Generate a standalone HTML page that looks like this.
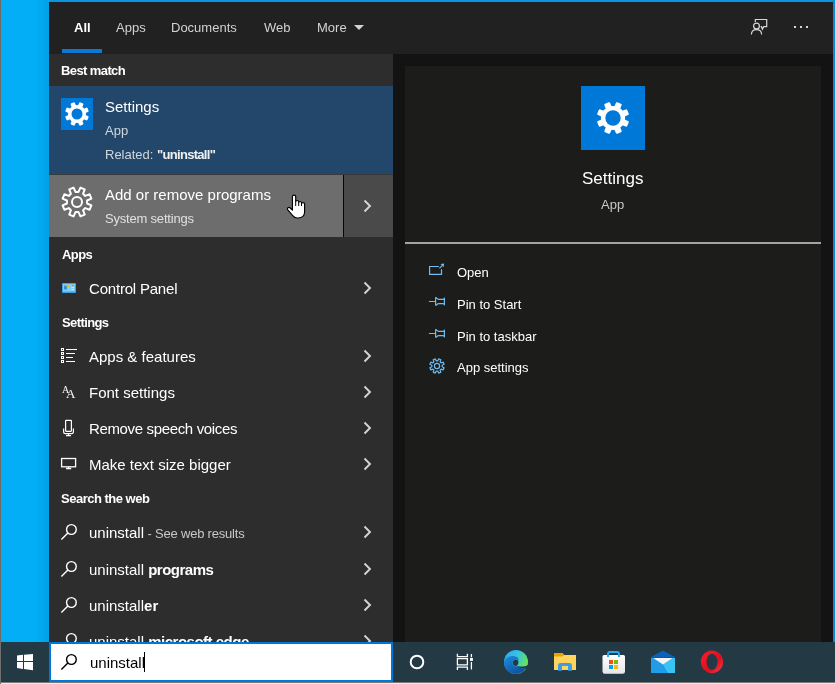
<!DOCTYPE html>
<html><head><meta charset="utf-8">
<style>
*{margin:0;padding:0;box-sizing:border-box}
html,body{width:835px;height:684px;overflow:hidden}
body{background:#03aef6;font-family:"Liberation Sans",sans-serif;position:relative;color:#fff}
.a{position:absolute;white-space:nowrap;will-change:transform}
svg{overflow:visible}
</style></head><body>
<div class="a" style="left:0;top:0;width:1px;height:684px;background:#6f6a68"></div>
<div class="a" style="left:49px;top:2px;width:784px;height:640px;background:#131313"></div>
<div class="a" style="left:49px;top:0;width:786px;height:2px;background:#0a94e2"></div>
<div class="a" style="left:833px;top:0;width:2px;height:642px;background:#0b88da"></div>
<div class="a" style="left:49px;top:2px;width:784px;height:52px;background:#212121"></div>
<div class="a" style="left:49px;top:54px;width:344px;height:588px;background:#2d2d2d"></div>
<div class="a" style="left:36px;top:0;width:13px;height:642px;background:linear-gradient(90deg,rgba(0,60,120,0),rgba(0,60,120,0.12))"></div>
<div class="a" style="left:405px;top:66px;width:416px;height:576px;background:#1c1c1b"></div>
<div class="a" style="left:74.0px;top:21.00px;font-size:13.00px;line-height:13.00px;color:#fff;font-weight:bold;">All</div>
<div class="a" style="left:116.0px;top:21.00px;font-size:13.00px;line-height:13.00px;color:#d2d2d2;font-weight:normal;">Apps</div>
<div class="a" style="left:171.0px;top:21.00px;font-size:13.00px;line-height:13.00px;color:#d2d2d2;font-weight:normal;">Documents</div>
<div class="a" style="left:264.0px;top:21.00px;font-size:13.00px;line-height:13.00px;color:#d2d2d2;font-weight:normal;">Web</div>
<div class="a" style="left:317.0px;top:21.00px;font-size:13.00px;line-height:13.00px;color:#d2d2d2;font-weight:normal;">More</div>
<svg class="a" style="left:354px;top:25px" width="10" height="5"><path d="M0 0H10L5 5Z" fill="#d2d2d2"/></svg>
<div class="a" style="left:62px;top:49px;width:40px;height:4px;background:#0a78d7"></div>
<svg class="a" style="left:745px;top:12px" width="30" height="30"><g fill="none" stroke="#d8d8d8" stroke-width="1.2">
<path d="M10.3 9.9V7.5H21.7V14.7H18.6L17.4 17.3L16.4 14.7H15.6"/><circle cx="11.5" cy="14" r="2.9"/><path d="M6.4 22.6C6.4 19.5 8.6 17.6 11.5 17.6C14.4 17.6 16.6 19.5 16.6 22.6"/></g></svg>
<div class="a" style="left:794px;top:26px;width:2px;height:2px;background:#d8d8d8"></div>
<div class="a" style="left:800px;top:26px;width:2px;height:2px;background:#d8d8d8"></div>
<div class="a" style="left:806px;top:26px;width:2px;height:2px;background:#d8d8d8"></div>
<div class="a" style="left:61.0px;top:63.70px;font-size:13.00px;line-height:13.00px;color:#fff;font-weight:bold;letter-spacing:-0.6px">Best match</div>
<div class="a" style="left:49px;top:86px;width:344px;height:88px;background:#22476a"></div>
<div class="a" style="left:61px;top:98px;width:32px;height:32px;background:#0078d7"></div>
<svg class="a" style="left:61px;top:98px" width="32" height="32"><circle cx="16.00" cy="16.00" r="9.00" fill="#fff"/><rect x="13.70" y="4.00" width="4.60" height="5.00" rx="1.2" fill="#fff" transform="rotate(22.5 16.00 16.00)"/><rect x="13.70" y="4.00" width="4.60" height="5.00" rx="1.2" fill="#fff" transform="rotate(67.5 16.00 16.00)"/><rect x="13.70" y="4.00" width="4.60" height="5.00" rx="1.2" fill="#fff" transform="rotate(112.5 16.00 16.00)"/><rect x="13.70" y="4.00" width="4.60" height="5.00" rx="1.2" fill="#fff" transform="rotate(157.5 16.00 16.00)"/><rect x="13.70" y="4.00" width="4.60" height="5.00" rx="1.2" fill="#fff" transform="rotate(202.5 16.00 16.00)"/><rect x="13.70" y="4.00" width="4.60" height="5.00" rx="1.2" fill="#fff" transform="rotate(247.5 16.00 16.00)"/><rect x="13.70" y="4.00" width="4.60" height="5.00" rx="1.2" fill="#fff" transform="rotate(292.5 16.00 16.00)"/><rect x="13.70" y="4.00" width="4.60" height="5.00" rx="1.2" fill="#fff" transform="rotate(337.5 16.00 16.00)"/><circle cx="16.00" cy="16.00" r="5.50" fill="#0078d7"/></svg>
<div class="a" style="left:105.0px;top:98.80px;font-size:15.00px;line-height:15.00px;color:#fff;font-weight:normal;">Settings</div>
<div class="a" style="left:105.0px;top:124.00px;font-size:13.00px;line-height:13.00px;color:#d0d8de;font-weight:normal;">App</div>
<div class="a" style="left:105.0px;top:147.60px;font-size:13.00px;line-height:13.00px;color:#d0d8de;font-weight:normal;">Related: <b style="color:#f0f0f0;letter-spacing:-0.7px">"uninstall"</b></div>
<div class="a" style="left:49px;top:174px;width:344px;height:1px;background:#3a3a3a"></div><div class="a" style="left:49px;top:175px;width:294px;height:62px;background:#6d6d6d"></div>
<div class="a" style="left:343px;top:175px;width:1px;height:62px;background:#050505"></div>
<div class="a" style="left:344px;top:175px;width:49px;height:62px;background:#4a4a4a"></div>
<svg class="a" style="left:61px;top:186px" width="32" height="32"><path d="M17.51 5.91 L19.45 1.61 L23.73 3.38 L22.07 7.80 L24.20 9.93 L28.62 8.27 L30.39 12.55 L26.09 14.49 L26.09 17.51 L30.39 19.45 L28.62 23.73 L24.20 22.07 L22.07 24.20 L23.73 28.62 L19.45 30.39 L17.51 26.09 L14.49 26.09 L12.55 30.39 L8.27 28.62 L9.93 24.20 L7.80 22.07 L3.38 23.73 L1.61 19.45 L5.91 17.51 L5.91 14.49 L1.61 12.55 L3.38 8.27 L7.80 9.93 L9.93 7.80 L8.27 3.38 L12.55 1.61 L14.49 5.91Z" fill="none" stroke="#fff" stroke-width="2" stroke-linejoin="round"/><circle cx="16" cy="16" r="5" fill="none" stroke="#fff" stroke-width="2"/></svg>
<div class="a" style="left:105.0px;top:186.90px;font-size:15.00px;line-height:15.00px;color:#fff;font-weight:normal;">Add or remove programs</div>
<div class="a" style="left:105.0px;top:211.70px;font-size:13.00px;line-height:13.00px;color:#e0e0e0;font-weight:normal;letter-spacing:-0.2px">System settings</div>
<svg class="a" style="left:363px;top:199px" width="10" height="14"><path d="M1.5 1.5L7 7L1.5 12.5" stroke="#d4d4d4" stroke-width="1.9" fill="none"/></svg>
<svg class="a" style="left:280px;top:190px" width="32" height="32"><path d="M12.4 6.6C12.4 5.7 13.1 5.1 14.05 5.1C15 5.1 15.7 5.7 15.7 6.6V11.6C15.9 10.9 16.5 10.5 17.2 10.5C18 10.5 18.7 11 18.7 11.8V12.6C18.9 11.9 19.5 11.5 20.1 11.5C20.9 11.5 21.5 12.1 21.5 12.8V13.7C21.7 13 22.3 12.6 23 12.6C23.9 12.6 24.6 13.2 24.6 14V22C24.6 25.6 22 28 18.2 28H17.2C15.2 28 13.9 27.2 12.7 25.7L7.8 19.9C7.3 19.2 7.3 18.3 8 17.8C8.6 17.3 9.6 17.4 10.2 18L12.4 20.2Z" fill="#fff" stroke="#000" stroke-width="1.15" stroke-linejoin="round"/>
<path d="M15.7 11.6V16M18.7 12.4V16M21.5 13.6V16" stroke="#000" stroke-width="1"/></svg>
<div class="a" style="left:61.5px;top:248.20px;font-size:13.00px;line-height:13.00px;color:#fff;font-weight:bold;letter-spacing:-0.6px">Apps</div>
<svg class="a" style="left:62px;top:283px" width="14" height="10">
<rect x="0" y="0" width="14" height="10" fill="#1e7fd0"/><rect x="0.6" y="0.6" width="12.8" height="8.8" fill="#7fd0f8"/>
<rect x="2" y="2.5" width="3" height="4" fill="#3a8fd8"/><path d="M3.5 2.2L6 1.8L7.5 3.5L5.5 4.5Z" fill="#f5b800"/><circle cx="11" cy="2.5" r="0.9" fill="#f08a00"/>
<rect x="9.5" y="4.2" width="2.5" height="0.8" fill="#cfefff"/><rect x="9.5" y="6.2" width="2.5" height="0.8" fill="#cfefff"/><rect x="0.6" y="8.5" width="12.8" height="1" fill="#3aa0e8"/></svg>
<div class="a" style="left:89.2px;top:280.90px;font-size:15.00px;line-height:15.00px;color:#fff;font-weight:normal;letter-spacing:-0.2px">Control Panel</div>
<svg class="a" style="left:363px;top:281px" width="10" height="14"><path d="M1.5 1.5L7 7L1.5 12.5" stroke="#d4d4d4" stroke-width="1.9" fill="none"/></svg>
<div class="a" style="left:61.5px;top:315.60px;font-size:13.00px;line-height:13.00px;color:#fff;font-weight:bold;letter-spacing:-0.6px">Settings</div>
<svg class="a" style="left:60px;top:347px" width="18" height="16" shape-rendering="crispEdges"><rect x="1" y="1" width="3" height="3" fill="#fff"/><rect x="2" y="2" width="1" height="1" fill="#2d2d2d"/><rect x="6" y="2" width="11" height="1" fill="#fff"/><rect x="1" y="5" width="3" height="3" fill="#fff"/><rect x="2" y="6" width="1" height="1" fill="#2d2d2d"/><rect x="6" y="6" width="9" height="1" fill="#fff"/><rect x="1" y="9" width="3" height="3" fill="#fff"/><rect x="2" y="10" width="1" height="1" fill="#2d2d2d"/><rect x="6" y="10" width="7" height="1" fill="#fff"/><rect x="1" y="13" width="3" height="3" fill="#fff"/><rect x="2" y="14" width="1" height="1" fill="#2d2d2d"/><rect x="6" y="14" width="9" height="1" fill="#fff"/></svg>
<div class="a" style="left:89.2px;top:349.30px;font-size:15.00px;line-height:15.00px;color:#fff;font-weight:normal;">Apps &amp; features</div>
<svg class="a" style="left:363px;top:349px" width="10" height="14"><path d="M1.5 1.5L7 7L1.5 12.5" stroke="#d4d4d4" stroke-width="1.9" fill="none"/></svg>
<div class="a" style="left:61.5px;top:385px;font-family:'Liberation Serif',serif;font-size:10px;line-height:10px;color:#fff">A</div>
<div class="a" style="left:65.5px;top:387px;font-family:'Liberation Serif',serif;font-size:13px;line-height:13px;color:#fff">A</div>
<div class="a" style="left:89.2px;top:384.80px;font-size:15.00px;line-height:15.00px;color:#fff;font-weight:normal;">Font settings</div>
<svg class="a" style="left:363px;top:385px" width="10" height="14"><path d="M1.5 1.5L7 7L1.5 12.5" stroke="#d4d4d4" stroke-width="1.9" fill="none"/></svg>
<svg class="a" style="left:60px;top:418px" width="16" height="20"><g fill="none" stroke="#fff" stroke-width="1.2"><rect x="5.6" y="2.3" width="5.8" height="11" rx="0.5"/><path d="M3.6 10.5V14C3.6 15 4.4 15.6 5.4 15.6H11.6C12.6 15.6 13.4 15 13.4 14V10.5"/><path d="M8.5 15.6V17.6M6 17.6H11"/></g></svg>
<div class="a" style="left:89.2px;top:420.70px;font-size:15.00px;line-height:15.00px;color:#fff;font-weight:normal;letter-spacing:-0.35px">Remove speech voices</div>
<svg class="a" style="left:363px;top:421px" width="10" height="14"><path d="M1.5 1.5L7 7L1.5 12.5" stroke="#d4d4d4" stroke-width="1.9" fill="none"/></svg>
<svg class="a" style="left:60px;top:456px" width="18" height="16"><g fill="none" stroke="#fff" stroke-width="1.3"><rect x="1.6" y="2.5" width="14" height="8.3"/><path d="M8.6 10.8V12.5M6 12.5H11.2"/></g></svg>
<div class="a" style="left:89.2px;top:456.60px;font-size:15.00px;line-height:15.00px;color:#fff;font-weight:normal;">Make text size bigger</div>
<svg class="a" style="left:363px;top:457px" width="10" height="14"><path d="M1.5 1.5L7 7L1.5 12.5" stroke="#d4d4d4" stroke-width="1.9" fill="none"/></svg>
<div class="a" style="left:61.4px;top:492.20px;font-size:13.00px;line-height:13.00px;color:#fff;font-weight:bold;letter-spacing:-0.5px">Search the web</div>
<svg class="a" style="left:60px;top:524px" width="18" height="18"><g fill="none" stroke="#fff" stroke-width="1.4"><circle cx="11.4" cy="5.5" r="4.85"/><path d="M7.9 9L1.4 15.5"/></g></svg>
<div class="a" style="left:89.2px;top:525.30px;font-size:15.00px;line-height:15.00px;color:#fff;font-weight:normal;">uninstall<span style="font-size:13px;color:#c8c8c8;letter-spacing:-0.2px"> - See web results</span></div>
<svg class="a" style="left:363px;top:525px" width="10" height="14"><path d="M1.5 1.5L7 7L1.5 12.5" stroke="#d4d4d4" stroke-width="1.9" fill="none"/></svg>
<svg class="a" style="left:60px;top:561px" width="18" height="18"><g fill="none" stroke="#fff" stroke-width="1.4"><circle cx="11.4" cy="5.5" r="4.85"/><path d="M7.9 9L1.4 15.5"/></g></svg>
<div class="a" style="left:89.2px;top:562.30px;font-size:15.00px;line-height:15.00px;color:#fff;font-weight:normal;">uninstall <b style="letter-spacing:-0.5px">programs</b></div>
<svg class="a" style="left:363px;top:562px" width="10" height="14"><path d="M1.5 1.5L7 7L1.5 12.5" stroke="#d4d4d4" stroke-width="1.9" fill="none"/></svg>
<svg class="a" style="left:60px;top:597px" width="18" height="18"><g fill="none" stroke="#fff" stroke-width="1.4"><circle cx="11.4" cy="5.5" r="4.85"/><path d="M7.9 9L1.4 15.5"/></g></svg>
<div class="a" style="left:89.2px;top:598.30px;font-size:15.00px;line-height:15.00px;color:#fff;font-weight:normal;">uninstall<b>er</b></div>
<svg class="a" style="left:363px;top:598px" width="10" height="14"><path d="M1.5 1.5L7 7L1.5 12.5" stroke="#d4d4d4" stroke-width="1.9" fill="none"/></svg>
<svg class="a" style="left:60px;top:633px" width="18" height="18"><g fill="none" stroke="#fff" stroke-width="1.4"><circle cx="11.4" cy="5.5" r="4.85"/><path d="M7.9 9L1.4 15.5"/></g></svg>
<div class="a" style="left:89.2px;top:634.30px;font-size:15.00px;line-height:15.00px;color:#fff;font-weight:normal;">uninstall <b style="letter-spacing:-0.5px">microsoft edge</b></div>
<svg class="a" style="left:363px;top:634px" width="10" height="14"><path d="M1.5 1.5L7 7L1.5 12.5" stroke="#d4d4d4" stroke-width="1.9" fill="none"/></svg>
<div class="a" style="left:581px;top:86px;width:64px;height:64px;background:#0078d7"></div>
<svg class="a" style="left:581px;top:86px" width="64" height="64"><circle cx="32.00" cy="32.00" r="12.10" fill="#fff"/><rect x="28.90" y="15.80" width="6.20" height="6.10" rx="1.2" fill="#fff" transform="rotate(22.5 32.00 32.00)"/><rect x="28.90" y="15.80" width="6.20" height="6.10" rx="1.2" fill="#fff" transform="rotate(67.5 32.00 32.00)"/><rect x="28.90" y="15.80" width="6.20" height="6.10" rx="1.2" fill="#fff" transform="rotate(112.5 32.00 32.00)"/><rect x="28.90" y="15.80" width="6.20" height="6.10" rx="1.2" fill="#fff" transform="rotate(157.5 32.00 32.00)"/><rect x="28.90" y="15.80" width="6.20" height="6.10" rx="1.2" fill="#fff" transform="rotate(202.5 32.00 32.00)"/><rect x="28.90" y="15.80" width="6.20" height="6.10" rx="1.2" fill="#fff" transform="rotate(247.5 32.00 32.00)"/><rect x="28.90" y="15.80" width="6.20" height="6.10" rx="1.2" fill="#fff" transform="rotate(292.5 32.00 32.00)"/><rect x="28.90" y="15.80" width="6.20" height="6.10" rx="1.2" fill="#fff" transform="rotate(337.5 32.00 32.00)"/><circle cx="32.00" cy="32.00" r="7.70" fill="#0078d7"/></svg>
<div class="a" style="left:581.5px;top:170.41px;font-size:17.00px;line-height:17.00px;color:#fff;font-weight:normal;">Settings</div>
<div class="a" style="left:601.0px;top:198.30px;font-size:13.00px;line-height:13.00px;color:#c8c8c8;font-weight:normal;">App</div>
<div class="a" style="left:405px;top:242px;width:416px;height:2px;background:#a3a3a3"></div>
<svg class="a" style="left:426px;top:260px" width="22" height="18"><g fill="none" stroke="#6fbcf2" stroke-width="1.2"><path d="M12.9 6.5H3.6V14.4H15.5V9.2"/><path d="M13.4 8.4L16.2 5.6"/></g><path d="M14.5 4L18.1 3.6L17.7 7.2Z" fill="#6fbcf2"/></svg>
<div class="a" style="left:457.4px;top:265.80px;font-size:13.00px;line-height:13.00px;color:#fff;font-weight:normal;">Open</div>
<svg class="a" style="left:426px;top:294px" width="22" height="16"><g fill="none" stroke="#6fbcf2" stroke-width="1.2" stroke-linejoin="round"><path d="M2.9 7.5H9.6M9.6 3.2V11.6M9.6 3.4C10.8 3.8 11.3 5.3 12.6 5.3H17C17.8 5.3 18.3 4.8 18.4 4.1V10.8C18.3 10.1 17.8 9.6 17 9.6H12.6C11.3 9.6 10.8 11.1 9.6 11.5"/></g></svg>
<div class="a" style="left:457.4px;top:297.80px;font-size:13.00px;line-height:13.00px;color:#fff;font-weight:normal;">Pin to Start</div>
<svg class="a" style="left:426px;top:326px" width="22" height="16"><g fill="none" stroke="#6fbcf2" stroke-width="1.2" stroke-linejoin="round"><path d="M2.9 7.5H9.6M9.6 3.2V11.6M9.6 3.4C10.8 3.8 11.3 5.3 12.6 5.3H17C17.8 5.3 18.3 4.8 18.4 4.1V10.8C18.3 10.1 17.8 9.6 17 9.6H12.6C11.3 9.6 10.8 11.1 9.6 11.5"/></g></svg>
<div class="a" style="left:457.4px;top:329.50px;font-size:13.00px;line-height:13.00px;color:#fff;font-weight:normal;">Pin to taskbar</div>
<svg class="a" style="left:429px;top:358px" width="16" height="16"><path d="M8.77 2.86 L9.70 0.90 L11.81 1.78 L11.09 3.82 L12.18 4.91 L14.22 4.19 L15.10 6.30 L13.14 7.23 L13.14 8.77 L15.10 9.70 L14.22 11.81 L12.18 11.09 L11.09 12.18 L11.81 14.22 L9.70 15.10 L8.77 13.14 L7.23 13.14 L6.30 15.10 L4.19 14.22 L4.91 12.18 L3.82 11.09 L1.78 11.81 L0.90 9.70 L2.86 8.77 L2.86 7.23 L0.90 6.30 L1.78 4.19 L3.82 4.91 L4.91 3.82 L4.19 1.78 L6.30 0.90 L7.23 2.86Z" fill="none" stroke="#6fbcf2" stroke-width="1.2" stroke-linejoin="round"/><circle cx="8" cy="8" r="2.6" fill="none" stroke="#6fbcf2" stroke-width="1.2"/></svg>
<div class="a" style="left:457.4px;top:360.80px;font-size:13.00px;line-height:13.00px;color:#fff;font-weight:normal;">App settings</div>
<div class="a" style="left:0;top:642px;width:835px;height:40px;background:#233944"></div>
<div class="a" style="left:0;top:682px;width:835px;height:1px;background:#7a7a7a"></div><div class="a" style="left:0;top:683px;width:835px;height:1px;background:#ececec"></div>
<div class="a" style="left:0;top:642px;width:1px;height:42px;background:#6f6f6f"></div>
<svg class="a" style="left:17px;top:654px" width="16" height="16"><path d="M0 1.4L6 0.8V7H0Z M7 0.7L16 0V7H7Z M0 8H6V14.9L0 14.1Z M7 8H16V16.3L7 15.1Z" fill="#fff"/></svg>
<div class="a" style="left:49px;top:642px;width:344px;height:40px;background:#fff;border:2px solid #0078d7"></div>
<svg class="a" style="left:60px;top:654px" width="18" height="18"><g fill="none" stroke="#000" stroke-width="1.4"><circle cx="11.4" cy="5.5" r="4.85"/><path d="M7.9 9L1.4 15.5"/></g></svg>
<div class="a" style="left:89.5px;top:655.00px;font-size:15.00px;line-height:15.00px;color:#000;font-weight:normal;">uninstall</div>
<div class="a" style="left:144px;top:652px;width:1px;height:20px;background:#000"></div>
<svg class="a" style="left:407px;top:652px" width="20" height="20"><circle cx="10" cy="10" r="6.3" fill="none" stroke="#fff" stroke-width="2"/></svg>
<svg class="a" style="left:450px;top:648px" width="30" height="28"><g fill="none" stroke="#fff" stroke-width="1.3"><path d="M7.4 5.8V8.6H17.4V5.8M7.4 22V19.2H17.4V22M7.4 10.6H17.4V16.8H7.4Z"/><path d="M21.4 6V9.2M21.4 14V21.6"/></g><rect x="20" y="10" width="2.9" height="2.9" fill="#fff"/></svg>
<svg class="a" style="left:504px;top:650px" width="24" height="24">
<defs><linearGradient id="eg" x1="0" y1="0" x2="1" y2="0.4"><stop offset="0" stop-color="#2aa8e8"/><stop offset="0.55" stop-color="#35c3e6"/><stop offset="1" stop-color="#67e35a"/></linearGradient>
<linearGradient id="eb" x1="0" y1="0" x2="0.7" y2="1"><stop offset="0" stop-color="#1c8ee0"/><stop offset="1" stop-color="#0d4f9c"/></linearGradient></defs>
<circle cx="12" cy="12" r="12" fill="url(#eg)"/>
<path d="M13.5 15.9C16.5 16.9 20 16.7 24.5 15V19H13.5Z" fill="#233944"/>
<path d="M8.6 13C8.6 10.8 10.2 9.5 12 9.5C13.7 9.5 14.4 10.6 14.4 12.2C14.4 14.5 13.2 16 11.8 16C9.8 16 8.6 14.8 8.6 13Z" fill="#233944"/>
<path d="M0 12.5C0.5 8.3 4.8 5.8 9.3 6C12.6 6.2 14.8 7.8 14.8 9.9C13.8 9.4 12.2 9.3 10.8 9.7C9.3 10.2 8.5 11.8 8.5 13.4C8.5 15.3 10 16.3 12.2 16.3L14 16.3C15 17.6 17 18.3 18.5 18.2C20 18.1 21.5 17.7 22.6 17.1C20.6 21.3 16.6 24 12 24C5.4 24 0 18.6 0 12.5Z" fill="url(#eb)"/>
</svg>
<svg class="a" style="left:554px;top:653px" width="22" height="18">
<path d="M0 0H8.5L10 2H22V17H0Z" fill="#ffd45e"/><path d="M0 0H8.5L10 2.6L8.5 3.5H0Z" fill="#e9a300"/>
<path d="M4 17.8V12.4Q4 10 6.4 10H15.6Q18 10 18 12.4V17.8H14V13H8V17.8Z" fill="#3d9ce6"/>
</svg>
<svg class="a" style="left:602px;top:651px" width="24" height="24">

<defs><linearGradient id="sg" x1="0" y1="0" x2="0" y2="1"><stop offset="0" stop-color="#ffffff"/><stop offset="1" stop-color="#e6e6e6"/></linearGradient></defs>
<path d="M0.5 5.5Q0.5 4 2 4H21.5Q23 4 23 5.5V20.5Q23 22.8 20.7 22.8H2.8Q0.5 22.8 0.5 20.5Z" fill="url(#sg)"/>
<path d="M6 6V3Q6 1 8 1H15Q17 1 17 3V6" fill="none" stroke="#2aaaf0" stroke-width="2"/><rect x="7" y="9" width="4" height="4" fill="#f25022"/><rect x="12" y="9" width="4" height="4" fill="#7fba00"/>
<rect x="7" y="14" width="4" height="4" fill="#00a4ef"/><rect x="12" y="14" width="4" height="4" fill="#ffb900"/>
</svg>
<svg class="a" style="left:651px;top:650px" width="24" height="24">
<path d="M0 7L12 0.4L24 7Z" fill="#0b62b8"/>
<path d="M0 7H24V23H0Z" fill="#1f9de8"/>
<path d="M24 7V23H17L12 14.5Z" fill="#38c4f3"/>

<path d="M2.2 8H21.8L12 14.6Z" fill="#f4f4f4"/>
<path d="M0 7H24V8H0Z" fill="#0a55a0"/>
</svg>
<svg class="a" style="left:700px;top:650px" width="24" height="24">
<defs><linearGradient id="og" x1="0" y1="0" x2="1" y2="1"><stop offset="0" stop-color="#ff1b2d"/><stop offset="0.6" stop-color="#d8101f"/><stop offset="1" stop-color="#f04050"/></linearGradient></defs>
<path d="M12 0.4C18.2 0.4 23.2 5.5 23.2 11.8C23.2 18.1 18.2 23.2 12 23.2C5.8 23.2 0.8 18.1 0.8 11.8C0.8 5.5 5.8 0.4 12 0.4ZM12 3.7C9.1 3.7 6.6 7.3 6.6 11.8C6.6 16.3 9.1 19.9 12 19.9C14.9 19.9 17.4 16.3 17.4 11.8C17.4 7.3 14.9 3.7 12 3.7Z" fill="url(#og)" fill-rule="evenodd"/>
</svg>
</body></html>
